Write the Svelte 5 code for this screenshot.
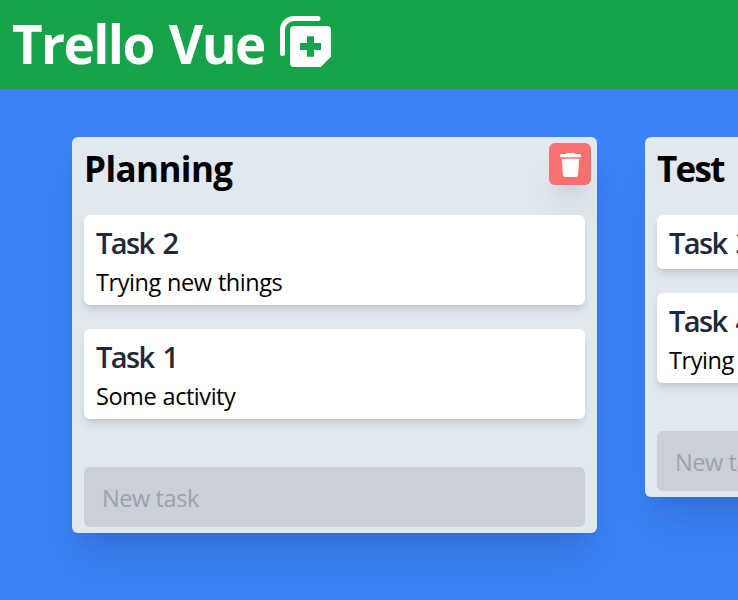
<script>
  const lists = [
    {
      title: 'Planning',
      tasks: [
        { title: 'Task 2', text: 'Trying new things' },
        { title: 'Task 1', text: 'Some activity' }
      ]
    },
    {
      title: 'Test',
      tasks: [
        { title: 'Task 3', text: '' },
        { title: 'Task 4', text: 'Trying new things' }
      ]
    }
  ];
</script>

<div class="app">
  <header>
    <h1>Trello Vue</h1>
    <button class="add" aria-label="Add list">
      <svg width="52" height="52" viewBox="0 0 52 52">
        <path d="M2.5 37.5V14A11.5 11.5 0 0 1 14 2.5h24" fill="none" stroke="#fff" stroke-width="5" stroke-linecap="round" />
        <path fill="#fff" fill-rule="evenodd" d="M14 10H47a4 4 0 0 1 4 4V40.8L40.8 51H14a4 4 0 0 1-4-4V14a4 4 0 0 1 4-4ZM27 20.200V27H20v7h7v6.700h7v-6.700h7v-7h-7v-6.800Z" />
      </svg>
    </button>
  </header>
  <main>
    {#each lists as list}
      <section class="list">
        <div class="head">
          <h2 class:short={list.title.length < 5}>{list.title}</h2>
          <button class="remove" aria-label="Delete list">
            <svg width="21" height="24" viewBox="0 0 21 24">
              <path fill="#fff" d="M1 1H5.500Q6.500 0 7.500 0h6Q14.500 0 15.500 1H20q1 0 1 1v1.500q0 .7-1 .7H1q-1 0-1-.7V2q0-1 1-1Z" />
              <path fill="#fff" d="M1.800 5.800h17.400L18 22q-.2 2-2 2H5q-1.800 0-2-2Z" />
            </svg>
          </button>
        </div>
        <div class="tasks">
          {#each list.tasks as task}
            <article>
              <h3>{task.title}</h3>
              {#if task.text}<p>{task.text}</p>{/if}
            </article>
          {/each}
        </div>
        <input type="text" placeholder="New task" aria-label="New task" />
      </section>
    {/each}
  </main>
</div>

<style>
  :global(body) { margin: 0; overflow: hidden; }
  * { box-sizing: border-box; }
  .app {
    width: 738px;
    height: 600px;
    overflow: hidden;
    background: #3b82f6;
    color: #000;
    font-family: "Open Sans", "Noto Sans", sans-serif;
  }
  header {
    height: 89px;
    padding: 0 12px;
    display: flex;
    align-items: flex-start;
    background: #16a34a;
    color: #fff;
  }
  h1, h2, h3, p { margin: 0; white-space: nowrap; }
  h1 { width: 268px; font-size: 53px; line-height: 87px; font-weight: 700; letter-spacing: -1.6px; word-spacing: 3px; }
  button { border: 0; padding: 0; display: flex; align-items: center; justify-content: center; }
  .add { margin-top: 16px; background: none; flex: none; }
  main { display: flex; align-items: flex-start; gap: 48px; padding: 48px 72px; }
  .list {
    width: 525px;
    flex: none;
    padding: 6px 12px;
    border-radius: 6px;
    background: #e2e8f0;
    box-shadow: 0 30px 37.5px -7.5px rgba(0, 0, 0, .1), 0 12px 15px -9px rgba(0, 0, 0, .1);
  }
  .head { height: 72px; display: flex; justify-content: space-between; align-items: flex-start; margin-right: -6px; }
  h2 { font-size: 35px; line-height: 52px; font-weight: 700; letter-spacing: -0.6px; }
  h2.short { letter-spacing: -1.7px; }
  .remove {
    width: 42px;
    height: 42px;
    border-radius: 6px;
    background: #f87171;
    box-shadow: 0 30px 37.5px -7.5px rgba(0, 0, 0, .1), 0 12px 15px -9px rgba(0, 0, 0, .1);
  }
  .remove svg { margin-top: 2px; }
  .tasks { display: flex; flex-direction: column; gap: 24px; }
  article {
    padding: 6px 12px;
    border-radius: 6px;
    background: #fff;
    box-shadow: 0 6px 9px -1.5px rgba(0, 0, 0, .1), 0 3px 6px -3px rgba(0, 0, 0, .1);
  }
  h3 { font-size: 29px; line-height: 44px; height: 42px; font-weight: 600; color: #1f2937; letter-spacing: -1.6px; word-spacing: 3px; }
  p { font-size: 23.5px; line-height: 38px; height: 36px; letter-spacing: -0.45px; word-spacing: 0.7px; }
  input {
    display: block;
    width: 100%;
    height: 60px;
    margin: 48px 0 0;
    padding: 2px 18px 0;
    border: 0;
    border-radius: 6px;
    background: #cbcfd8;
    font: 23.5px "Open Sans", "Noto Sans", sans-serif;
    letter-spacing: -0.4px;
  }
  input::placeholder { color: #9ca3af; opacity: 1; }
</style>
